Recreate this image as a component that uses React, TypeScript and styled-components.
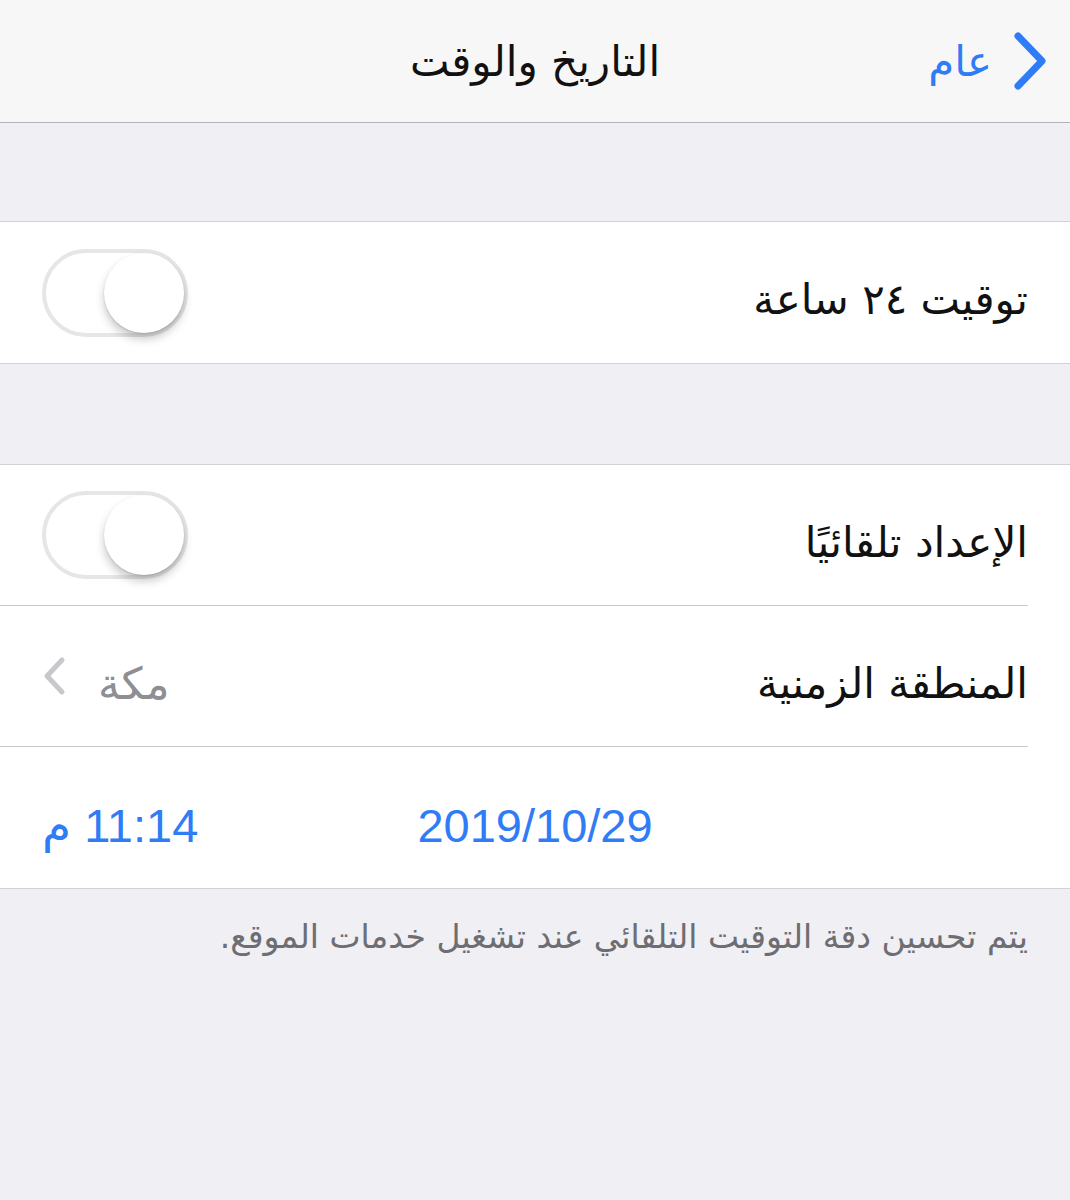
import styled, { createGlobalStyle } from 'styled-components';

const GlobalStyle = createGlobalStyle`
  html, body {
    margin: 0;
    padding: 0;
    background: #efeff4;
  }
  body {
    font-family: "DejaVu Sans", "Noto Sans", sans-serif;
    direction: rtl;
  }
`;

const Page = styled.div`
  width: 1070px;
  min-height: 1200px;
  background: #efeff4;
`;

const NavBar = styled.div`
  height: 122px;
  background: #f7f7f7;
  border-bottom: 1px solid #b4b4b8;
  display: grid;
  grid-template-columns: 1fr auto 1fr;
  align-items: center;
`;

const BackButton = styled.div`
  display: flex;
  align-items: center;
  gap: 20px;
  padding-right: 22px;
  color: #2f7cf6;
  font-size: 42px;
`;

const NavTitle = styled.div`
  font-size: 42px;
  color: #111;
`;

const Gap = styled.div<{ $h: number }>`
  height: ${p => p.$h}px;
`;

const Group = styled.div`
  background: #fff;
  border-top: 1px solid #d1d1d6;
  border-bottom: 1px solid #d1d1d6;
`;

const Row = styled.div`
  padding-right: 42px;
`;

const RowInner = styled.div<{ $divider?: boolean }>`
  height: 141px;
  box-sizing: border-box;
  padding-left: 42px;
  display: flex;
  align-items: center;
  justify-content: space-between;
  border-bottom: ${p => (p.$divider ? '1px solid #c8c7cc' : 'none')};
`;

const Label = styled.div`
  font-size: 42px;
  color: #111;
  padding-top: 14px;
`;

const Toggle = styled.div`
  width: 146px;
  height: 88px;
  box-sizing: border-box;
  border: 4px solid #e6e6e8;
  border-radius: 44px;
  position: relative;
`;

const Knob = styled.div`
  position: absolute;
  top: 0;
  right: 0;
  width: 80px;
  height: 80px;
  border-radius: 50%;
  background: #fff;
  box-shadow: 0 6px 10px rgba(0, 0, 0, 0.22), 0 1px 2px rgba(0, 0, 0, 0.12);
`;

const Detail = styled.div`
  display: flex;
  align-items: center;
  gap: 32px;
  color: #8e8e93;
  font-size: 44px;
`;

const DetailText = styled.span`
  padding-top: 14px;
`;

const DateRow = styled.div`
  height: 141px;
  padding: 16px 42px 0;
  box-sizing: border-box;
  display: grid;
  grid-template-columns: 1fr auto 1fr;
  align-items: center;
`;

const BlueValue = styled.div<{ $end?: boolean }>`
  font-family: "Liberation Sans", "DejaVu Sans", sans-serif;
  font-size: 47px;
  color: #2f7cf6;
  justify-self: ${p => (p.$end ? 'end' : 'center')};
`;

const Footer = styled.div`
  padding: 28px 42px 0;
  font-size: 33px;
  color: #6d6d72;
`;

const Switch = () => (
  <Toggle>
    <Knob />
  </Toggle>
);

export default function App() {
  return (
    <Page>
      <GlobalStyle />
      <NavBar>
        <BackButton>
          <svg width="36" height="62" viewBox="0 0 36 62">
            <path d="M6 6 L30 31 L6 56" fill="none" stroke="#2f7cf6" strokeWidth="7" strokeLinecap="round" strokeLinejoin="round" />
          </svg>
          <span>عام</span>
        </BackButton>
        <NavTitle>التاريخ والوقت</NavTitle>
        <div />
      </NavBar>
      <Gap $h={98} />
      <Group>
        <Row>
          <RowInner>
            <Label>توقيت ٢٤ ساعة</Label>
            <Switch />
          </RowInner>
        </Row>
      </Group>
      <Gap $h={100} />
      <Group>
        <Row>
          <RowInner $divider>
            <Label>الإعداد تلقائيًا</Label>
            <Switch />
          </RowInner>
        </Row>
        <Row>
          <RowInner $divider>
            <Label>المنطقة الزمنية</Label>
            <Detail>
              <DetailText>مكة</DetailText>
              <svg width="24" height="40" viewBox="0 0 24 40">
                <path d="M20 4 L5 20 L20 36" fill="none" stroke="#c7c7cc" strokeWidth="5" strokeLinecap="round" strokeLinejoin="round" />
              </svg>
            </Detail>
          </RowInner>
        </Row>
        <DateRow>
          <div />
          <BlueValue>2019/10/29</BlueValue>
          <BlueValue $end>11:14 م</BlueValue>
        </DateRow>
      </Group>
      <Footer>يتم تحسين دقة التوقيت التلقائي عند تشغيل خدمات الموقع.</Footer>
    </Page>
  );
}
